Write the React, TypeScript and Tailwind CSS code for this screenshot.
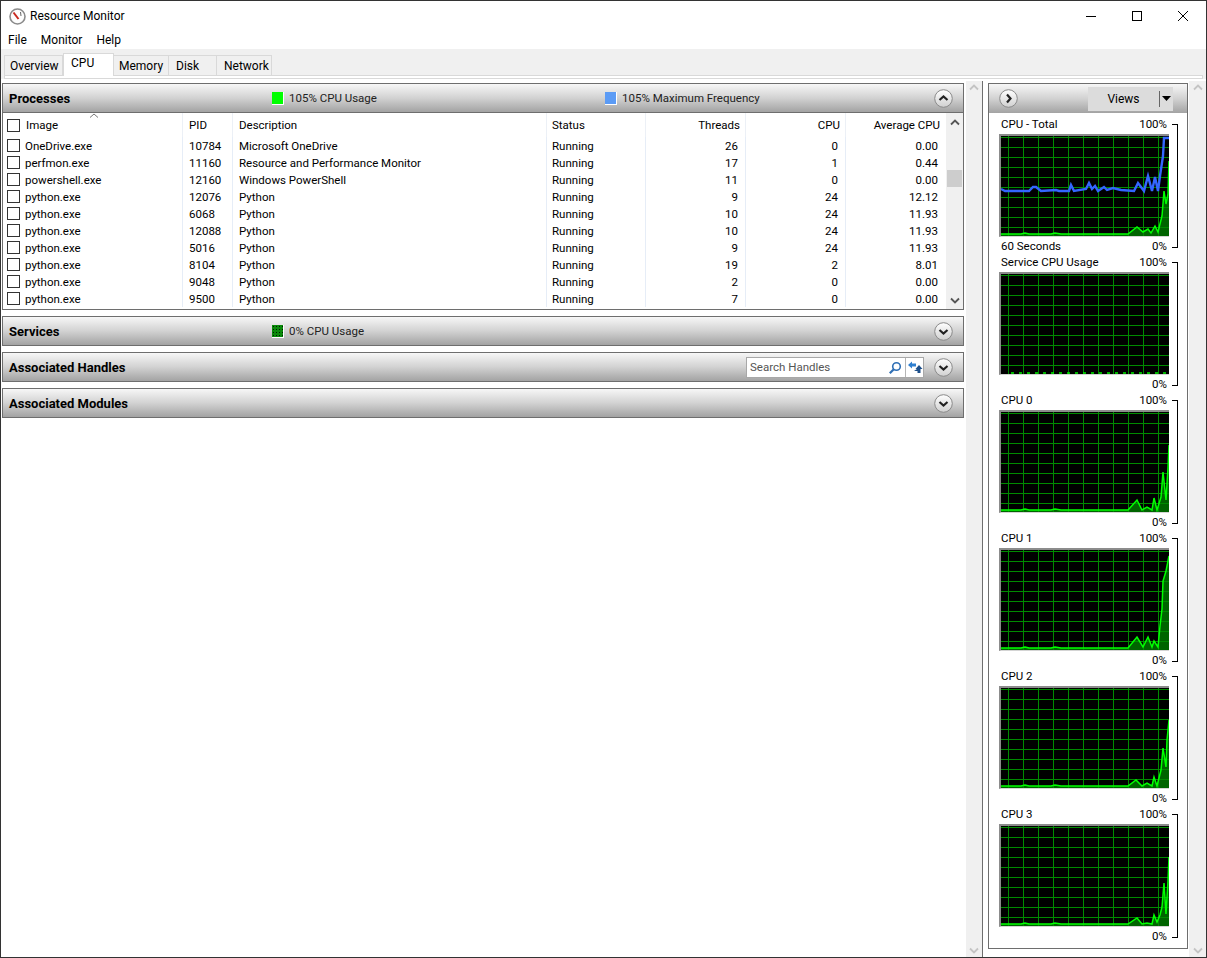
import React from 'react'

const rows = [
  ['OneDrive.exe', '10784', 'Microsoft OneDrive', 'Running', '26', '0', '0.00'],
  ['perfmon.exe', '11160', 'Resource and Performance Monitor', 'Running', '17', '1', '0.44'],
  ['powershell.exe', '12160', 'Windows PowerShell', 'Running', '11', '0', '0.00'],
  ['python.exe', '12076', 'Python', 'Running', '9', '24', '12.12'],
  ['python.exe', '6068', 'Python', 'Running', '10', '24', '11.93'],
  ['python.exe', '12088', 'Python', 'Running', '10', '24', '11.93'],
  ['python.exe', '5016', 'Python', 'Running', '9', '24', '11.93'],
  ['python.exe', '8104', 'Python', 'Running', '19', '2', '8.01'],
  ['python.exe', '9048', 'Python', 'Running', '2', '0', '0.00'],
  ['python.exe', '9500', 'Python', 'Running', '7', '0', '0.00'],
]

const gridCols = 'grid grid-cols-[180px_50px_314px_99px_100px_100px_100px] text-[11.5px]'
const headerBg = 'bg-gradient-to-b from-[#f7f7f7] via-[#d2d2d2] to-[#a3a3a3]'

const base = '0,98 20,98 24,97 28,98 50,98 54,97 60,98 90,98 110,98 '

const graphs = [
  {
    top: 'CPU - Total', bottom: '60 Seconds',
    green: base + '127,98 136,91 142,96 147,93 150,97 154,90 157,96 161,80 163,55 165,68 167,58 168,25',
    blue: '0,53 4,55 28,55 32,51 35,51 40,55 55,54 58,55 68,55 70,49 73,55 85,53 88,47 91,53 94,50 97,55 103,51 106,54 112,52 120,54 133,55 137,47 143,55 147,40 151,55 154,41 157,55 159,40 162,20 163,2 168,2',
  },
  { top: 'Service CPU Usage', bottom: '', green: '', blue: '' },
  {
    top: 'CPU 0', bottom: '',
    green: base + '127,98 136,88 141,98 146,95 151,98 153,86 156,98 160,85 162,60 165,88 167,56 168,33',
    blue: '',
  },
  {
    top: 'CPU 1', bottom: '',
    green: base + '127,98 136,87 142,97 147,87 151,97 153,91 157,97 159,76 161,59 162,31 165,21 168,6',
    blue: '',
  },
  {
    top: 'CPU 2', bottom: '',
    green: base + '127,98 135,92 141,98 146,95 151,98 153,89 156,98 160,82 162,60 165,79 166,52 168,32',
    blue: '',
  },
  {
    top: 'CPU 3', bottom: '',
    green: base + '127,98 136,92 141,98 146,97 151,98 153,89 156,96 159,89 161,81 163,57 165,88 167,55 168,31',
    blue: '',
  },
]

const gridXs = [7, 22, 37, 52, 67, 82, 97, 112, 127, 142, 157]
const gridYs = [1, 11, 21, 31, 41, 51, 61, 71, 81, 91]

function Chevron({ dir, className }: { dir: 'up' | 'down'; className?: string }) {
  return (
    <svg width="10" height="7" viewBox="0 0 10 7" className={className}>
      <path d={dir === 'up' ? 'M1 5.5 L5 1.5 L9 5.5' : 'M1 1.5 L5 5.5 L9 1.5'} fill="none" stroke="currentColor" strokeWidth="1.8" />
    </svg>
  )
}

function RoundButton({ dir }: { dir: 'up' | 'down' | 'right' }) {
  const d = dir === 'up' ? 'M5.5 11 L9.5 7.5 L13.5 11' : dir === 'down' ? 'M5.5 8 L9.5 11.5 L13.5 8' : 'M8 5.5 L11.5 9.5 L8 13.5'
  return (
    <svg width="19" height="19" viewBox="0 0 19 19" className="shrink-0">
      <defs>
        <linearGradient id={'round-' + dir} x1="0" y1="0" x2="0" y2="1">
          <stop offset="0" stopColor="#ffffff" />
          <stop offset="1" stopColor="#d0d0d0" />
        </linearGradient>
      </defs>
      <circle cx="9.5" cy="9.5" r="8.8" fill={'url(#round-' + dir + ')'} stroke="#8a8a8a" />
      <path d={d} fill="none" stroke="#222" strokeWidth="2.2" />
    </svg>
  )
}

function Legend({ color, label, dotted }: { color: string; label: string; dotted?: boolean }) {
  return (
    <div className="flex items-center gap-[5px]">
      <div
        className={'w-[12px] h-[13px] border-b border-r border-white ' + color + (dotted ? ' bg-[radial-gradient(#001a00_40%,transparent_45%)] bg-[length:3px_3px]' : '')}
      />
      <span className="text-[#222] text-[11.5px]">{label}</span>
    </div>
  )
}

function SectionBar({ title, children, dir }: { title: string; children?: React.ReactNode; dir: 'up' | 'down' }) {
  return (
    <div className={'h-[30px] shrink-0 border border-[#6e6e6e] flex items-center pl-[6px] pr-[10px] ' + headerBg}>
      <span className="w-[263px] shrink-0 font-bold text-[13px] pt-px text-black">{title}</span>
      <div className="flex-1 min-w-0 flex items-center pt-px">{children}</div>
      <RoundButton dir={dir} />
    </div>
  )
}

function Graph({ green, blue, service }: { green: string; blue: string; service: boolean }) {
  return (
    <div className="w-[170px] h-[103px] border-t-2 border-l-2 border-b border-t-[#8c8c8c] border-l-[#8c8c8c] border-b-[#d4d4d4] bg-black">
      <svg width="168" height="100" viewBox="0 0 168 100" className="block">
        {green && <polygon points={green + ' 168,100 0,100'} fill="#006400" />}
        <g fill="#008a00" shapeRendering="crispEdges">
          {gridXs.map((x) => <rect key={'v' + x} x={x} y={0} width={1} height={100} />)}
          {gridYs.map((y) => <rect key={'h' + y} x={0} y={y} width={168} height={1} />)}
        </g>
        {green && <polyline points={green} fill="none" stroke="#00ff00" strokeWidth="1.5" />}
        {service && <line x1="10" x2="168" y1="99" y2="99" stroke="#00f000" strokeWidth="1.6" strokeDasharray="3 5" />}
        {blue && <polyline points={blue} fill="none" stroke="#3366ff" strokeWidth="2.4" />}
      </svg>
    </div>
  )
}

function GraphBlock({ top, bottom, green, blue }: { top: string; bottom: string; green: string; blue: string }) {
  return (
    <div className="h-[138px] flex text-[11.5px]">
      <div className="w-[170px] flex flex-col">
        <div className="h-[17px] flex items-center justify-between px-[2px] mb-[1px]">
          <span>{top}</span>
          <span>100%</span>
        </div>
        <Graph green={green} blue={blue} service={top === 'Service CPU Usage'} />
        <div className="h-[17px] flex items-center justify-between px-[2px] pt-[2px]">
          <span>{bottom}</span>
          <span>0%</span>
        </div>
      </div>
      <div className="mt-[8px] ml-[3px] h-[124px] w-[6px] border-t border-r border-b border-black" />
    </div>
  )
}

export default function App() {
  return (
    <div className="w-[1207px] h-[958px] bg-white border border-[#333] flex flex-col overflow-hidden text-[12px] leading-none text-black font-['Roboto',sans-serif]">
      {/* title bar */}
      <div className="h-[30px] shrink-0 flex items-center">
        <svg width="17" height="17" viewBox="0 0 17 17" className="ml-[8px] mr-[4px]">
          <circle cx="8.5" cy="8.5" r="7.5" fill="#fdfdfd" stroke="#8b8b8b" strokeWidth="1.6" />
          <path d="M4.5 4.5 L9.5 11" stroke="#c8281e" strokeWidth="2" />
          <path d="M11.5 4 L12 8" stroke="#666" strokeWidth="1" />
        </svg>
        <span>Resource Monitor</span>
        <div className="ml-auto flex">
          <div className="w-[46px] h-[30px] flex items-center justify-center">
            <svg width="10" height="10" viewBox="0 0 10 10"><path d="M0 5.5 H10" stroke="#000" /></svg>
          </div>
          <div className="w-[46px] h-[30px] flex items-center justify-center">
            <svg width="10" height="10" viewBox="0 0 10 10"><rect x="0.5" y="0.5" width="9" height="9" fill="none" stroke="#000" /></svg>
          </div>
          <div className="w-[46px] h-[30px] flex items-center justify-center">
            <svg width="10" height="10" viewBox="0 0 10 10"><path d="M0 0 L10 10 M10 0 L0 10" stroke="#000" /></svg>
          </div>
        </div>
      </div>

      {/* menu */}
      <div className="h-[18px] shrink-0 flex items-center gap-[14px] pl-[7px]">
        <span>File</span>
        <span>Monitor</span>
        <span>Help</span>
      </div>

      {/* tabs */}
      <div className="h-[30px] shrink-0 bg-[#f0f0f0] px-[3px]">
        <div className="h-[26px] flex items-end">
          <div className="w-[59px] h-[20px] border border-b-0 border-[#d9d9d9] flex items-center pl-[5px]">Overview</div>
          <div className="w-[51px] h-[23px] mb-[-1px] bg-white border border-b-0 border-[#d9d9d9] flex items-start pt-[3px] pl-[7px]">CPU</div>
          <div className="w-[55px] h-[20px] border border-b-0 border-l-0 border-[#d9d9d9] flex items-center pl-[5px]">Memory</div>
          <div className="w-[48px] h-[20px] border border-b-0 border-l-0 border-[#d9d9d9] flex items-center pl-[7px]">Disk</div>
          <div className="w-[55px] h-[20px] border border-b-0 border-l-0 border-[#d9d9d9] flex items-center pl-[7px]">Network</div>
        </div>
        <div className="h-[4px] bg-white border border-[#d9d9d9]" />
      </div>

      {/* main */}
      <div className="flex-1 min-h-0 flex pt-[2px]">
        <div className="w-[962px] shrink-0 ml-[1px] mt-[2px] flex flex-col gap-[6px]">
          <div className="h-[227px] flex flex-col shrink-0">
            <SectionBar title="Processes" dir="up">
              <div className="w-[333px]"><Legend color="bg-[#00ff00]" label="105% CPU Usage" /></div>
              <Legend color="bg-[#5b9bf5]" label="105% Maximum Frequency" />
            </SectionBar>
            <div className="relative flex-1 flex border-l border-r border-b border-[#6e6e6e]">
              <svg width="10" height="5" viewBox="0 0 10 5" className="absolute left-[86px] top-0 text-[#777]">
                <path d="M1 4.5 L5 1 L9 4.5" fill="none" stroke="currentColor" />
              </svg>
              <div className="flex-1 min-w-0">
                <div className={gridCols + ' h-[24px] items-stretch'}>
                  <div className="flex items-center pl-[4px] gap-[6px] border-r border-[#ecf0f6]">
                    <span className="w-[13px] h-[13px] border border-[#333]" />
                    <span className="pt-[2px]">Image</span>
                  </div>
                  <div className="flex items-center pt-[2px] pl-[6px] border-r border-[#ecf0f6]">PID</div>
                  <div className="flex items-center pt-[2px] pl-[6px] border-r border-[#ecf0f6]">Description</div>
                  <div className="flex items-center pt-[2px] pl-[5px] border-r border-[#ecf0f6]">Status</div>
                  <div className="flex items-center pt-[2px] justify-end pr-[5px] border-r border-[#ecf0f6]">Threads</div>
                  <div className="flex items-center pt-[2px] justify-end pr-[5px] border-r border-[#ecf0f6]">CPU</div>
                  <div className="flex items-center pt-[2px] justify-end pr-[6px]">Average CPU</div>
                </div>
                {rows.map((r) => (
                  <div key={r[1]} className={gridCols + ' h-[17px] items-stretch'}>
                    <div className="flex items-center pl-[4px] gap-[5px] border-r border-[#e6edf7]">
                      <span className="w-[13px] h-[13px] border border-[#333]" />
                      <span className="pt-[2px]">{r[0]}</span>
                    </div>
                    <div className="flex items-center pt-[2px] pl-[6px] border-r border-[#e6edf7]">{r[1]}</div>
                    <div className="flex items-center pt-[2px] pl-[6px] border-r border-[#e6edf7]">{r[2]}</div>
                    <div className="flex items-center pt-[2px] pl-[5px] border-r border-[#e6edf7]">{r[3]}</div>
                    <div className="flex items-center pt-[2px] justify-end pr-[7px] border-r border-[#e6edf7]">{r[4]}</div>
                    <div className="flex items-center pt-[2px] justify-end pr-[7px] border-r border-[#e6edf7]">{r[5]}</div>
                    <div className="flex items-center pt-[2px] justify-end pr-[8px]">{r[6]}</div>
                  </div>
                ))}
              </div>
              <div className="w-[17px] bg-[#f0f0f0] flex flex-col items-center pt-[6px] pb-[5px] text-[#555]">
                <Chevron dir="up" />
                <div className="w-[15px] h-[17px] bg-[#cdcdcd] mt-[44px]" />
                <Chevron dir="down" className="mt-auto" />
              </div>
            </div>
          </div>

          <SectionBar title="Services" dir="down">
            <Legend color="bg-[#0a8a0a]" label="0% CPU Usage" dotted />
          </SectionBar>

          <SectionBar title="Associated Handles" dir="down">
            <div className="ml-auto mr-[10px] w-[178px] h-[21px] bg-white border border-[#a8a8a8] flex items-center pl-[3px]">
              <span className="text-[#555] text-[11.5px] flex-1">Search Handles</span>
              <svg width="14" height="14" viewBox="0 0 14 14" className="mr-[3px]">
                <circle cx="8.5" cy="5.5" r="3.8" fill="none" stroke="#2f6fb5" strokeWidth="1.6" />
                <path d="M5.8 8.2 L1.8 12.2" stroke="#2f6fb5" strokeWidth="2.2" />
              </svg>
              <div className="w-px h-[19px] bg-[#b5b5b5]" />
              <svg width="17" height="15" viewBox="0 0 17 15">
                <path d="M2 5 L6 1.5 V3.5 H10 V6.5 H6 V8.5 Z" fill="#2f7fd0" />
                <path d="M13 5 L16.5 9 H14.5 V13 H11.5 V11 H8 L11 9 H11.5 V9 H9.5 Z" fill="#1d4f8a" />
              </svg>
            </div>
          </SectionBar>

          <SectionBar title="Associated Modules" dir="down" />
        </div>

        <div className="ml-[2px] w-[16px] bg-[#f0f0f0] flex flex-col items-center justify-between py-[3px] text-[#c4c4c4]">
          <Chevron dir="up" />
          <Chevron dir="down" />
        </div>
        <div className="w-px bg-[#6e6e6e]" />

        <div className="w-[200px] shrink-0 ml-[5px] mt-[2px] mb-[8px] border border-[#6e6e6e] flex flex-col">
          <div className={'h-[29px] shrink-0 flex items-center pl-[10px] pr-[14px] ' + headerBg}>
            <RoundButton dir="right" />
            <div className="ml-auto w-[85px] h-[24px] bg-[#dcdcdc] flex items-center">
              <span className="w-[71px] text-center">Views</span>
              <div className="w-px h-[16px] bg-[#666]" />
              <svg width="9" height="5" viewBox="0 0 9 5" className="ml-[2px]"><path d="M0 0 H9 L4.5 5 Z" fill="#000" /></svg>
            </div>
          </div>
          <div className="pl-[10px] pt-[3px]">
            {graphs.map((g) => (
              <GraphBlock key={g.top} top={g.top} bottom={g.bottom} green={g.green} blue={g.blue} />
            ))}
          </div>
        </div>

        <div className="ml-auto w-[17px] bg-[#f0f0f0] flex flex-col items-center justify-between py-[3px] text-[#c4c4c4]">
          <Chevron dir="up" />
          <Chevron dir="down" />
        </div>
      </div>
    </div>
  )
}
